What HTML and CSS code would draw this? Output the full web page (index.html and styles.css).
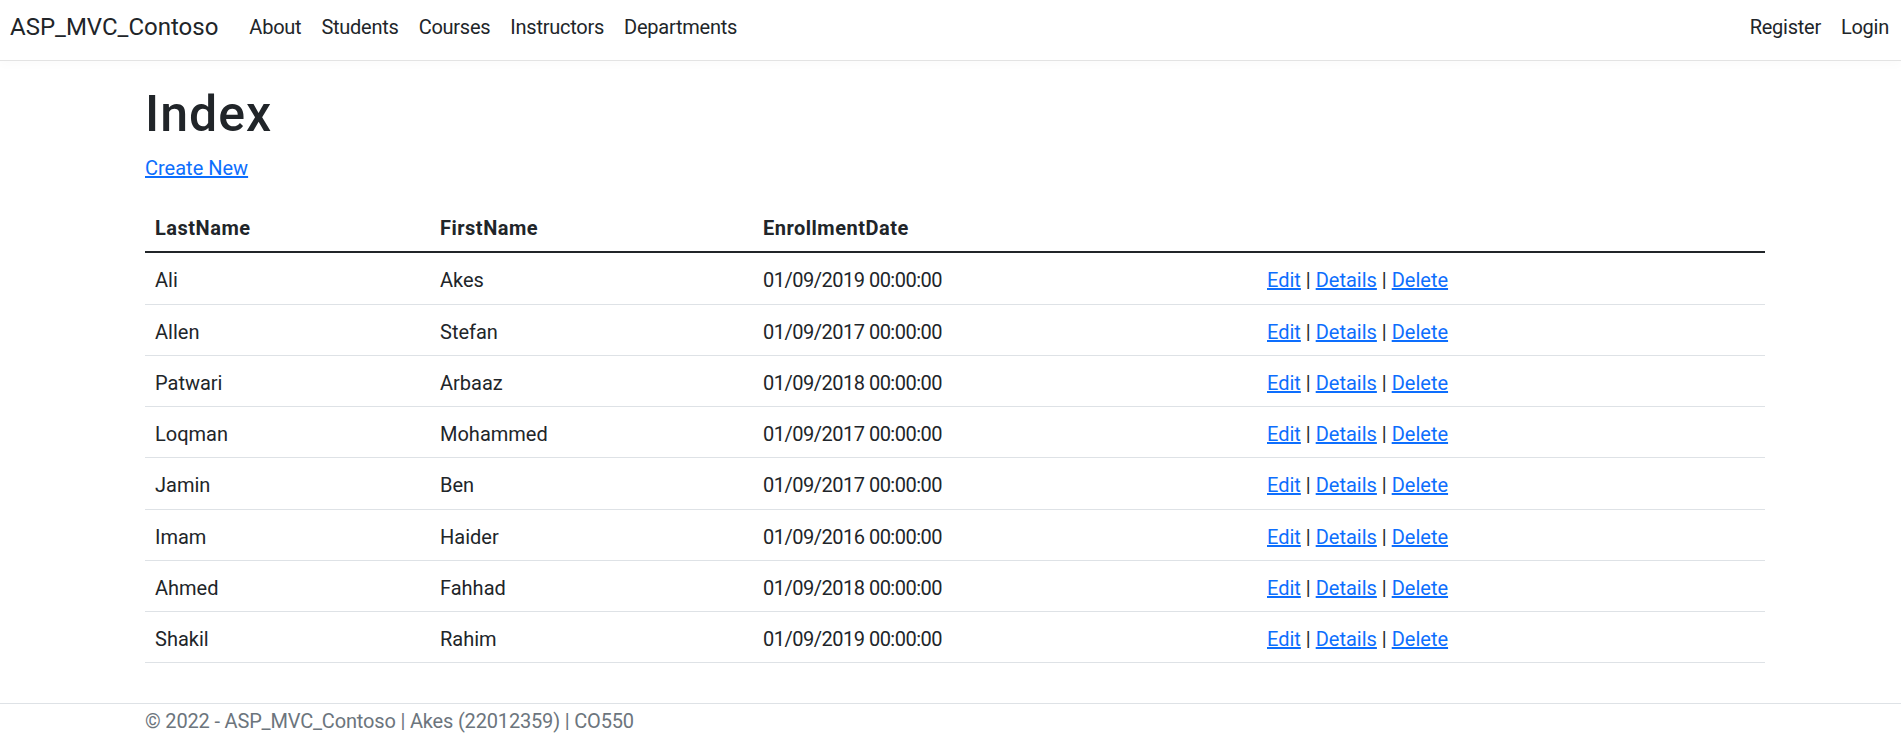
FILE: index.html
```html
<!DOCTYPE html>
<html lang="en">
<head>
<meta charset="utf-8">
<title>Index - ASP_MVC_Contoso</title>
<link rel="stylesheet" href="styles.css">
</head>
<body>
<header class="site-header">
  <nav class="navbar">
    <a class="brand" href="#">ASP_MVC_Contoso</a>
    <ul class="nav-list nav-main">
      <li><a class="nav-link" href="#">About</a></li>
      <li><a class="nav-link" href="#">Students</a></li>
      <li><a class="nav-link" href="#">Courses</a></li>
      <li><a class="nav-link" href="#">Instructors</a></li>
      <li><a class="nav-link" href="#">Departments</a></li>
    </ul>
    <ul class="nav-list nav-auth">
      <li><a class="nav-link" href="#">Register</a></li>
      <li><a class="nav-link" href="#">Login</a></li>
    </ul>
  </nav>
</header>
<main class="container main">
  <h1 class="page-title">Index</h1>
  <p class="create"><a href="#">Create New</a></p>
  <table class="table">
    <colgroup>
      <col class="c1"><col class="c2"><col class="c3"><col class="c4">
    </colgroup>
    <thead>
      <tr><th>LastName</th><th>FirstName</th><th>EnrollmentDate</th><th></th></tr>
    </thead>
    <tbody>
      <tr><td>Ali</td><td>Akes</td><td class="date">01/09/2019 00:00:00</td><td><a href="#">Edit</a> | <a href="#">Details</a> | <a href="#">Delete</a></td></tr>
      <tr><td>Allen</td><td>Stefan</td><td class="date">01/09/2017 00:00:00</td><td><a href="#">Edit</a> | <a href="#">Details</a> | <a href="#">Delete</a></td></tr>
      <tr><td>Patwari</td><td>Arbaaz</td><td class="date">01/09/2018 00:00:00</td><td><a href="#">Edit</a> | <a href="#">Details</a> | <a href="#">Delete</a></td></tr>
      <tr><td>Loqman</td><td>Mohammed</td><td class="date">01/09/2017 00:00:00</td><td><a href="#">Edit</a> | <a href="#">Details</a> | <a href="#">Delete</a></td></tr>
      <tr><td>Jamin</td><td>Ben</td><td class="date">01/09/2017 00:00:00</td><td><a href="#">Edit</a> | <a href="#">Details</a> | <a href="#">Delete</a></td></tr>
      <tr><td>Imam</td><td>Haider</td><td class="date">01/09/2016 00:00:00</td><td><a href="#">Edit</a> | <a href="#">Details</a> | <a href="#">Delete</a></td></tr>
      <tr><td>Ahmed</td><td>Fahhad</td><td class="date">01/09/2018 00:00:00</td><td><a href="#">Edit</a> | <a href="#">Details</a> | <a href="#">Delete</a></td></tr>
      <tr><td>Shakil</td><td>Rahim</td><td class="date">01/09/2019 00:00:00</td><td><a href="#">Edit</a> | <a href="#">Details</a> | <a href="#">Delete</a></td></tr>
    </tbody>
  </table>
</main>
<footer class="footer">
  <div class="container">© 2022 - ASP_MVC_Contoso | Akes (22012359) | CO550</div>
</footer>
</body>
</html>
```
FILE: styles.css
```css
* { box-sizing: border-box; }

html, body {
  margin: 0;
  padding: 0;
  background: #fff;
}

body {
  font-family: Roboto, "Segoe UI", "Liberation Sans", sans-serif;
  font-size: 20px;
  line-height: 1.5;
  color: #212529;
}

a { color: #0d6efd; }

.site-header {
  border-bottom: 1px solid #e3e3e3;
  box-shadow: 0 4px 10px rgba(0, 0, 0, 0.02);
  margin-bottom: 20px;
}

.navbar {
  display: flex;
  align-items: center;
  height: 60px;
  padding: 0 2px 6px 10px;
}

.brand {
  font-size: 24px;
  color: #212529;
  text-decoration: none;
  margin-right: 21px;
}

.nav-list {
  display: flex;
  list-style: none;
  margin: 0;
  padding: 0;
}

.nav-auth { margin-left: auto; }

.nav-link {
  display: block;
  padding: 0 10px;
  color: #212529;
  text-decoration: none;
  letter-spacing: -0.25px;
}

.container {
  width: 1620px;
  margin-left: 145px;
}

.main { padding-bottom: 20px; }

.page-title {
  font-size: 50px;
  font-weight: 500;
  line-height: 1.2;
  letter-spacing: 1px;
  padding-top: 3px;
  margin: 0 0 7px;
}

.create {
  padding-top: 2px;
  margin: 0 0 18px;
}

.table {
  width: 100%;
  border-collapse: collapse;
  table-layout: fixed;
  margin-bottom: 20px;
}

.c1 { width: 285px; }
.c2 { width: 323px; }
.c3 { width: 504px; }

.table th,
.table td {
  text-align: left;
  padding: 12px 10px 8px;
  line-height: 30.25px;
  border-bottom: 1px solid #dee2e6;
}

.table th {
  font-weight: 700;
  letter-spacing: 0.5px;
}

.table thead th { border-bottom: 2px solid #212529; }

.table .date { letter-spacing: -0.5px; }

.footer {
  border-top: 1px solid #dee2e6;
  color: #6c757d;
  line-height: 30px;
  padding-top: 2px;
  letter-spacing: -0.17px;
}
```
